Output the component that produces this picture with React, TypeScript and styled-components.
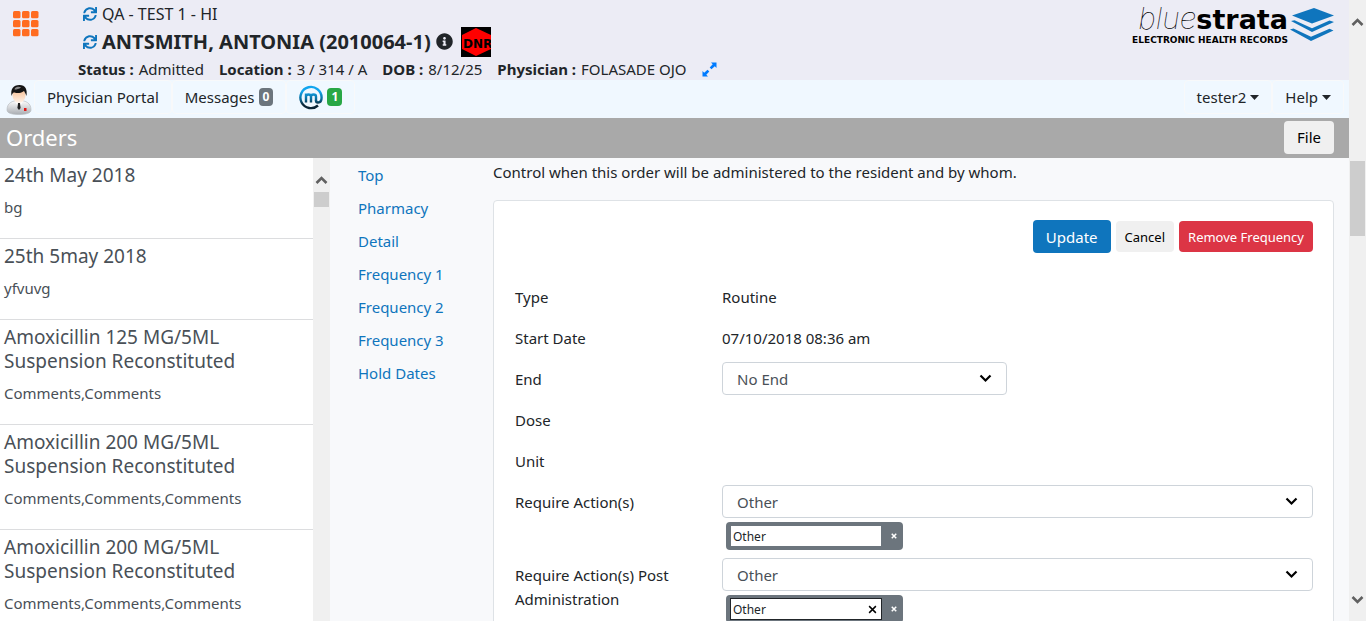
import React from "react";
import styled, { createGlobalStyle } from "styled-components";
import { FaSync, FaInfoCircle } from "react-icons/fa";

const Global = createGlobalStyle`
  * { box-sizing: border-box; }
  body {
    margin: 0;
    font-family: "Noto Sans", "Open Sans", sans-serif;
    font-size: 15px;
    line-height: 24px;
    color: #212529;
    background: #f8f9fb;
  }
  button, input, select { font-family: inherit; margin: 0; }
  p, h1, h2, h3, ul, dl, dd { margin: 0; padding: 0; font-weight: 400; }
  svg { display: block; flex: none; }
`;

const Page = styled.div`
  display: flex;
  height: 100vh;
  overflow: hidden;
`;

const Frame = styled.div`
  flex: 1;
  min-width: 0;
  display: flex;
  flex-direction: column;
`;

/* Scroll tracks */

const Track = styled.div<{ $top: number }>`
  flex: none;
  width: 17px;
  display: flex;
  flex-direction: column;
  align-items: center;
  padding: ${(p) => p.$top}px 0 16px;
  background: #f0f0f0;
`;

const Thumb = styled.div<{ $height: number; $gap: number }>`
  width: 15px;
  height: ${(p) => p.$height}px;
  margin-top: ${(p) => p.$gap}px;
  margin-bottom: auto;
  background: #cdcdcd;
`;

const ScrollArrow = ({ down }: { down?: boolean }) => (
  <svg width="13" height="10" viewBox="0 0 13 10" aria-hidden="true">
    <path
      d={down ? "M1.5 2L6.5 7L11.5 2" : "M1.5 8L6.5 3L11.5 8"}
      fill="none"
      stroke="#606060"
      strokeWidth="2.6"
    />
  </svg>
);

/* Header */

const Header = styled.header`
  flex: none;
  display: flex;
  height: 80px;
  padding: 0 15px 0 13px;
  background: #ececf5;
`;

const AppsButton = styled.button`
  width: 65px;
  padding: 11px 0 0;
  border: 0;
  background: none;
  display: flex;
  align-items: flex-start;
`;

const Patient = styled.div`
  flex: 1;
  padding-top: 1px;
`;

const HeaderLine = styled.div`
  display: flex;
  align-items: center;
  gap: 5px;
  height: 25px;
  padding-left: 5px;
  font-size: 16px;
  white-space: nowrap;
`;

const NameLine = styled(HeaderLine)`
  height: 31px;
`;

const PatientName = styled.h1`
  font-size: 20px;
  font-weight: 700;
`;

const Flags = styled.div`
  display: flex;
  align-items: center;
  gap: 8px;
`;

const Facts = styled.dl`
  display: flex;
  align-items: center;
  gap: 15px;
  white-space: nowrap;
`;

const Fact = styled.div`
  display: flex;
  gap: 5px;
  dt { font-weight: 700; }
`;

const Logo = styled.div`
  display: flex;
  align-items: flex-start;
  gap: 2px;
  padding-top: 3px;
  color: #000;
  white-space: nowrap;
  > svg { margin-top: 5px; }
`;

const LogoText = styled.div`
  display: flex;
  flex-direction: column;
  align-items: flex-end;
`;

const Wordmark = styled.div`
  display: flex;
  align-items: baseline;
  font-size: 27px;
  line-height: 31px;
`;

const Blue = styled.span`
  font-family: Inter, sans-serif;
  font-size: 30px;
  font-style: italic;
  font-weight: 100;
`;

const Strata = styled.span`
  font-family: "DejaVu Sans", sans-serif;
  font-weight: 700;
`;

const Tagline = styled.div`
  font-family: "DejaVu Sans", sans-serif;
  font-size: 9px;
  line-height: 10px;
  font-weight: 700;
`;

/* Navigation */

const Nav = styled.nav`
  flex: none;
  display: flex;
  align-items: flex-start;
  height: 38px;
  padding: 0 5px 0 6px;
  background: #f0f8ff;
`;

const NavItem = styled.button`
  display: flex;
  align-items: center;
  gap: 4px;
  height: 34px;
  padding: 0 12px;
  border: 1px solid #f8f9fa;
  border-radius: 4px;
  background: none;
  font-size: 15px;
  color: #212529;
`;

const NavSpace = styled.div`
  flex: 1;
`;

const Avatar = styled.div`
  width: 28px;
  padding-top: 4px;
`;

const Badge = styled.span<{ $green?: boolean }>`
  padding: 0 4px;
  border-radius: 4px;
  font-size: 12px;
  line-height: 18px;
  font-weight: 700;
  color: #fff;
  background: ${(p) => (p.$green ? "#28a745" : "#6c757d")};
`;

const Caret = () => (
  <svg width="9" height="5" viewBox="0 0 9 5" aria-hidden="true">
    <path d="M0 0H9L4.5 5Z" fill="#212529" />
  </svg>
);

/* Title bar */

const TitleBar = styled.div`
  flex: none;
  display: flex;
  align-items: center;
  justify-content: space-between;
  height: 40px;
  padding: 0 15px 2px 6px;
  background: #a9a9a9;
`;

const Title = styled.h2`
  font-size: 22px;
  color: #fff;
`;

const Button = styled.button<{ $kind?: "primary" | "danger"; $small?: boolean }>`
  height: ${(p) => (p.$small ? 31 : 33)}px;
  padding: 0 ${(p) => (p.$small ? 8 : 12)}px;
  border: 1px solid transparent;
  border-radius: 4px;
  font-size: ${(p) => (p.$small ? 13 : 15)}px;
  white-space: nowrap;
  color: ${(p) => (p.$kind ? "#fff" : "#000")};
  background: ${(p) =>
    p.$kind === "primary" ? "#0f75bd" : p.$kind === "danger" ? "#dc3545" : "#f0f0f0"};
`;

/* Body */

const Body = styled.div`
  flex: 1;
  min-height: 0;
  display: flex;
`;

const OrderList = styled.ul`
  flex: none;
  width: 313px;
  overflow: hidden;
  list-style: none;
  background: #fff;
  color: #495057;
`;

const Order = styled.li`
  padding: 5px 4px 19px;
  border-bottom: 1px solid #dcdddf;
`;

const OrderTitle = styled.h3`
  margin-bottom: 8px;
  font-size: 19px;
  line-height: 24px;
`;

const Sections = styled.nav`
  flex: none;
  width: 163px;
  padding: 1px 0 0 28px;
  display: flex;
  flex-direction: column;
  align-items: flex-start;
`;

const SectionLink = styled.a`
  line-height: 33px;
  color: #0f75bd;
  text-decoration: none;
`;

const Main = styled.main`
  flex: 1;
  min-width: 0;
  padding: 2px 15px 0 0;
`;

const Card = styled.form`
  margin-top: 16px;
  padding: 19px 20px 19px 21px;
  border: 1px solid #dee2e6;
  border-radius: 4px;
  background: #fff;
`;

const Actions = styled.div`
  display: flex;
  align-items: center;
  justify-content: flex-end;
  gap: 5px;
  margin-bottom: 27px;
`;

const Row = styled.div`
  display: grid;
  grid-template-columns: repeat(4, minmax(0, 1fr));
  column-gap: 30px;
  min-height: 33px;
  margin-bottom: 8px;
`;

const RowLabel = styled.label`
  padding-top: 5px;
`;

const RowValue = styled.div`
  grid-column: span 3;
`;

const RowText = styled.p`
  padding-top: 5px;
`;

const SelectBox = styled.div<{ $short?: boolean }>`
  display: grid;
  align-items: center;
  max-width: ${(p) => (p.$short ? "285px" : "none")};
  > * { grid-area: 1 / 1; }
  > svg { justify-self: end; margin-right: 15px; pointer-events: none; }
`;

const SelectInput = styled.select`
  appearance: none;
  width: 100%;
  height: 33px;
  padding: 0 36px 0 14px;
  border: 1px solid #ced4da;
  border-radius: 4px;
  background: #fff;
  font-size: 15px;
  color: #495057;
`;

const Tag = styled.div`
  display: flex;
  align-items: center;
  justify-content: space-between;
  width: 177px;
  height: 28px;
  margin: 4px 0 0 4px;
  padding-left: 4px;
  border-radius: 4px;
  background: #6c757d;
`;

const TagField = styled.div<{ $focused?: boolean }>`
  display: flex;
  align-items: center;
  width: 152px;
  height: 22px;
  border: 1px solid ${(p) => (p.$focused ? "#212529" : "#6c757d")};
  background: #fff;
`;

const TagInput = styled.input`
  flex: 1;
  min-width: 0;
  height: 20px;
  padding: 0 2px;
  border: 0;
  outline: 0;
  background: none;
  font-size: 12px;
  color: #212529;
`;

const IconButton = styled.button`
  display: flex;
  align-items: center;
  justify-content: center;
  width: 18px;
  height: 20px;
  padding: 0;
  border: 0;
  background: none;
`;

const Cross = ({ size, color }: { size: number; color: string }) => (
  <svg width={size} height={size} viewBox="0 0 8 8" aria-hidden="true">
    <path d="M1 1L7 7M7 1L1 7" stroke={color} strokeWidth={size > 6 ? 1.3 : 2} />
  </svg>
);

const Chevron = () => (
  <svg width="13" height="10" viewBox="0 0 13 10" aria-hidden="true">
    <path d="M1.5 1.5L6.5 6.5L11.5 1.5" fill="none" stroke="#000" strokeWidth="2.2" />
  </svg>
);

const AppsIcon = () => (
  <svg width="26" height="26" viewBox="0 0 26 26" fill="#ff6c20" aria-hidden="true">
    {[0, 9, 18].map((y) =>
      [0, 9, 18].map((x) => <rect key={`${x}-${y}`} x={x} y={y} width="7.5" height="7.2" rx="1.5" />)
    )}
  </svg>
);

const DnrIcon = () => (
  <svg width="30" height="30" viewBox="0 0 30 30" role="img" aria-label="DNR">
    <rect width="30" height="30" fill="#000" />
    <path d="M15 1L30 8V22L15 29L1 22V8Z" fill="#f00" />
    <text x="2" y="21" fontSize="12" fontWeight="700" fontFamily="DejaVu Sans, sans-serif" fill="#000">
      DNR
    </text>
  </svg>
);

const ExpandIcon = () => (
  <svg width="15" height="15" viewBox="0 0 15 15" fill="#007bff" aria-hidden="true">
    <path d="M9 0.5H14.5V6L12.800 4.300L9.500 7.300L7.700 5.500L10.700 2.200Z" />
    <path d="M6 14.500H0.500V9L2.200 10.700L5.500 7.700L7.300 9.500L4.300 12.800Z" />
  </svg>
);

const StackIcon = () => (
  <svg width="44" height="34" viewBox="0 0 44 34" fill="#0f75bd" aria-hidden="true">
    <path d="M24 0L44 7.5L22 15.5L2 7.5Z" />
    <path d="M1 13L4.5 12.2L22 20.3L39.500 12.6L44 14L22 24Z" />
    <path d="M0 21.500L3.500 20.600L21 28.700L39.500 20.800L43.500 22.500L21 33Z" />
  </svg>
);

const DoctorIcon = () => (
  <svg width="26" height="31" viewBox="0 0 26 31" aria-hidden="true">
    <defs>
      <linearGradient id="coat" x1="0" y1="0" x2="0" y2="1">
        <stop offset="0" stopColor="#fff" />
        <stop offset="1" stopColor="#a9adb2" />
      </linearGradient>
      <linearGradient id="face" x1="0" y1="0" x2="0" y2="1">
        <stop offset="0" stopColor="#f6b98a" />
        <stop offset="1" stopColor="#fff4ea" />
      </linearGradient>
    </defs>
    <path d="M1 26C1 19 6 16.500 13 16.500S25 19 25 26C25 29.500 19 30.500 13 30.500S1 29.500 1 26Z" fill="url(#coat)" stroke="#b9bdc2" strokeWidth="0.7" />
    <path d="M9 17L13 25L17 17Z" fill="#fff" />
    <path d="M12 19H14L14.600 24L13 26L11.400 24Z" fill="#222" />
    <ellipse cx="13" cy="11.500" rx="6.500" ry="7.500" fill="url(#face)" />
    <path d="M5.500 12C4.500 5 7 1 13.500 1C19.500 1 21.500 5.500 20.500 12C19.500 10 19 8.500 18 7C14 10 9.500 9 7.500 8.500C6.500 9.500 6 10.500 5.500 12Z" fill="#151515" />
    <path d="M9 4C11 2.300 14 2.300 15 3.500C13 5 11 5.500 8.500 5.500Z" fill="#8a8a8a" />
    <rect x="18" y="24" width="2.500" height="3" fill="#e01616" />
  </svg>
);

const MIcon = () => (
  <svg width="24" height="25" viewBox="0 0 24 25" aria-hidden="true">
    <defs>
      <linearGradient id="mring" gradientUnits="userSpaceOnUse" x1="0" y1="0" x2="0" y2="25">
        <stop offset="0.25" stopColor="#12a5ee" />
        <stop offset="0.55" stopColor="#0b6f9f" />
        <stop offset="0.8" stopColor="#0b2434" />
      </linearGradient>
    </defs>
    <g fill="none" stroke="url(#mring)">
      <path d="M19 20.500A10.600 10.600 0 1 1 22.600 12.500C22.600 16 21 17.500 19 17.500Q17 17.500 17 15.500" strokeWidth="2.400" />
      <path d="M7 17.500V8.500M7 11.500Q7 9.500 9.500 9.500T12 11.500V17.500M12 11.500Q12 9.500 14.500 9.500T17 11.500V16" strokeWidth="2.400" />
    </g>
  </svg>
);

const orders = [
  { title: "24th May 2018", note: "bg" },
  { title: "25th 5may 2018", note: "yfvuvg" },
  { title: "Amoxicillin 125 MG/5ML Suspension Reconstituted", note: "Comments,Comments" },
  { title: "Amoxicillin 200 MG/5ML Suspension Reconstituted", note: "Comments,Comments,Comments" },
  { title: "Amoxicillin 200 MG/5ML Suspension Reconstituted", note: "Comments,Comments,Comments" },
];

const sections = ["Top", "Pharmacy", "Detail", "Frequency 1", "Frequency 2", "Frequency 3", "Hold Dates"];

const facts = [
  ["Status :", "Admitted"],
  ["Location :", "3 / 314 / A"],
  ["DOB :", "8/12/25"],
  ["Physician :", "FOLASADE OJO"],
];

const Select = ({ id, value, short }: { id: string; value: string; short?: boolean }) => (
  <SelectBox $short={short}>
    <SelectInput id={id} defaultValue={value}>
      <option>{value}</option>
    </SelectInput>
    <Chevron />
  </SelectBox>
);

const ActionTag = ({ label, focused }: { label: string; focused?: boolean }) => (
  <Tag>
    <TagField $focused={focused}>
      <TagInput aria-label={label} defaultValue="Other" />
      {focused && (
        <IconButton type="button" aria-label="Clear">
          <Cross size={9} color="#000" />
        </IconButton>
      )}
    </TagField>
    <IconButton type="button" aria-label="Remove">
      <Cross size={6} color="#fff" />
    </IconButton>
  </Tag>
);

export default function App() {
  return (
    <Page>
      <Global />
      <Frame>
        <Header>
          <AppsButton aria-label="Applications">
            <AppsIcon />
          </AppsButton>
          <Patient>
            <HeaderLine>
              <FaSync size={14} color="#0f75bd" />
              <span>QA - TEST 1 - HI</span>
            </HeaderLine>
            <NameLine>
              <FaSync size={14} color="#0f75bd" />
              <PatientName>ANTSMITH, ANTONIA (2010064-1)</PatientName>
              <Flags>
                <FaInfoCircle size={17} />
                <DnrIcon />
              </Flags>
            </NameLine>
            <Facts>
              {facts.map(([name, value]) => (
                <Fact key={name}>
                  <dt>{name}</dt>
                  <dd>{value}</dd>
                </Fact>
              ))}
              <ExpandIcon />
            </Facts>
          </Patient>
          <Logo>
            <LogoText>
              <Wordmark>
                <Blue>blue</Blue>
                <Strata>strata</Strata>
              </Wordmark>
              <Tagline>ELECTRONIC HEALTH RECORDS</Tagline>
            </LogoText>
            <StackIcon />
          </Logo>
        </Header>

        <Nav>
          <Avatar>
            <DoctorIcon />
          </Avatar>
          <NavItem>Physician Portal</NavItem>
          <NavItem>
            Messages <Badge>0</Badge>
          </NavItem>
          <NavItem aria-label="Messages m">
            <MIcon />
            <Badge $green>1</Badge>
          </NavItem>
          <NavSpace />
          <NavItem>
            tester2 <Caret />
          </NavItem>
          <NavItem>
            Help <Caret />
          </NavItem>
        </Nav>

        <TitleBar>
          <Title>Orders</Title>
          <Button>File</Button>
        </TitleBar>

        <Body>
          <OrderList>
            {orders.map((order, i) => (
              <Order key={i}>
                <OrderTitle>{order.title}</OrderTitle>
                <p>{order.note}</p>
              </Order>
            ))}
          </OrderList>
          <Track $top={17}>
            <ScrollArrow />
            <Thumb $height={15} $gap={7} />
          </Track>
          <Sections>
            {sections.map((name) => (
              <SectionLink key={name} href="#">
                {name}
              </SectionLink>
            ))}
          </Sections>
          <Main>
            <p>Control when this order will be administered to the resident and by whom.</p>
            <Card>
              <Actions>
                <Button type="button" $kind="primary">Update</Button>
                <Button type="button" $small>Cancel</Button>
                <Button type="button" $small $kind="danger">Remove Frequency</Button>
              </Actions>
              <Row>
                <RowLabel as="span">Type</RowLabel>
                <RowValue><RowText>Routine</RowText></RowValue>
              </Row>
              <Row>
                <RowLabel as="span">Start Date</RowLabel>
                <RowValue><RowText>07/10/2018 08:36 am</RowText></RowValue>
              </Row>
              <Row>
                <RowLabel htmlFor="end">End</RowLabel>
                <RowValue><Select id="end" value="No End" short /></RowValue>
              </Row>
              <Row>
                <RowLabel as="span">Dose</RowLabel>
              </Row>
              <Row>
                <RowLabel as="span">Unit</RowLabel>
              </Row>
              <Row>
                <RowLabel htmlFor="action">Require Action(s)</RowLabel>
                <RowValue>
                  <Select id="action" value="Other" />
                  <ActionTag label="Action" />
                </RowValue>
              </Row>
              <Row>
                <RowLabel htmlFor="post">Require Action(s) Post Administration</RowLabel>
                <RowValue>
                  <Select id="post" value="Other" />
                  <ActionTag label="Post administration action" focused />
                </RowValue>
              </Row>
            </Card>
          </Main>
        </Body>
      </Frame>
      <Track $top={17}>
        <ScrollArrow />
        <Thumb $height={75} $gap={134} />
        <ScrollArrow down />
      </Track>
    </Page>
  );
}
